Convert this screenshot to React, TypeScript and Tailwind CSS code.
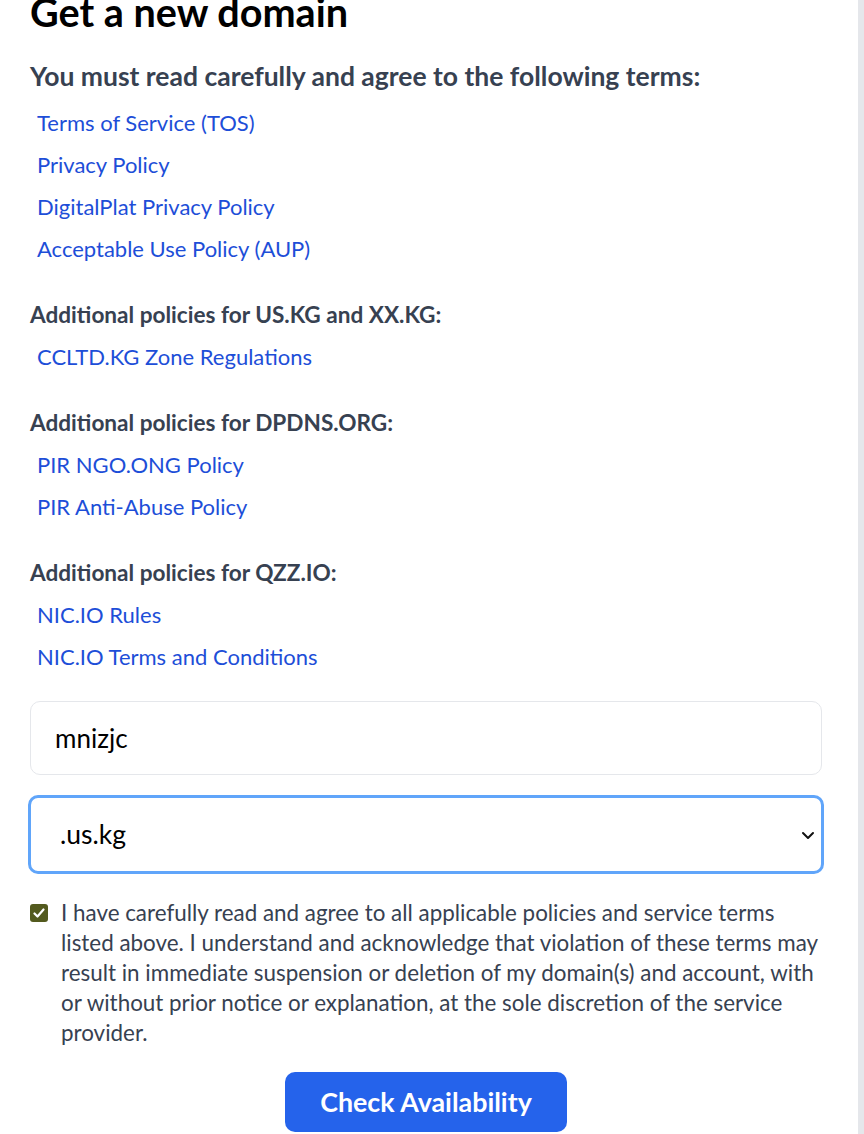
import React from "react";

const links1 = [
  "Terms of Service (TOS)",
  "Privacy Policy",
  "DigitalPlat Privacy Policy",
  "Acceptable Use Policy (AUP)",
];

function LinkList({ items }: { items: string[] }) {
  return (
    <div className="flex flex-col pl-[7px]">
      {items.map((t) => (
        <a key={t} href="#" className="text-[22px] leading-[42px] text-[#1d4ed8]">
          {t}
        </a>
      ))}
    </div>
  );
}

function Section({ title, items }: { title: string; items: string[] }) {
  return (
    <div className="mt-[24px] flex flex-col">
      <div className="text-[22.6px] font-bold leading-[42px] text-[#374151]">{title}</div>
      <LinkList items={items} />
    </div>
  );
}

export default function App() {
  return (
    <div className="min-h-[1134px] w-full bg-[#e5e7eb]" style={{ fontFamily: "Lato, 'Noto Sans', sans-serif" }}>
      <div className="w-[858px] min-h-[1134px] overflow-hidden bg-white pl-[30px] pr-[36px]">
        <h1 className="mt-[-10px] text-[39.6px] font-bold leading-[44px] text-black">Get a new domain</h1>
        <div className="mt-[26px] text-[26.5px] font-bold leading-[32px] text-[#374151]">
          You must read carefully and agree to the following terms:
        </div>
        <div className="mt-[10px]">
          <LinkList items={links1} />
        </div>
        <Section title="Additional policies for US.KG and XX.KG:" items={["CCLTD.KG Zone Regulations"]} />
        <Section title="Additional policies for DPDNS.ORG:" items={["PIR NGO.ONG Policy", "PIR Anti-Abuse Policy"]} />
        <Section title="Additional policies for QZZ.IO:" items={["NIC.IO Rules", "NIC.IO Terms and Conditions"]} />

        <div className="mt-[23px] flex h-[74px] w-[792px] items-center rounded-[10px] border border-[#e5e7eb] pl-[24px] text-[26px] text-black">
          mnizjc
        </div>
        <div className="ml-[-2px] mt-[20px] flex h-[79px] w-[796px] items-center justify-between rounded-[10px] border-[3px] border-[#60a5fa] pl-[29px] pr-[6px] text-[26.5px] text-black">
          <span>.us.kg</span>
          <svg width="14" height="10" viewBox="0 0 14 10" fill="none">
            <path d="M2 3l5 5 5-5" stroke="#111" strokeWidth="2" strokeLinecap="round" strokeLinejoin="round" />
          </svg>
        </div>

        <div className="mt-[24px] flex gap-[13px]">
          <div className="mt-[6px] flex h-[18px] w-[18px] shrink-0 items-center justify-center rounded-[3px] bg-[#535a1e]">
            <svg width="12" height="10" viewBox="0 0 12 10" fill="none">
              <path d="M1.5 5.5l3 3L10.5 1.5" stroke="white" strokeWidth="2.2" strokeLinecap="round" strokeLinejoin="round" />
            </svg>
          </div>
          <p className="mr-[-30px] whitespace-nowrap text-[22.4px] leading-[30px] text-[#374151]">
            I have carefully read and agree to all applicable policies and service terms
            <br />
            listed above. I understand and acknowledge that violation of these terms may
            <br />
            result in immediate suspension or deletion of my domain(s) and account, with
            <br />
            or without prior notice or explanation, at the sole discretion of the service
            <br />
            provider.
          </p>
        </div>

        <div className="mt-[24px] flex justify-center">
          <button className="h-[60px] w-[282px] rounded-[10px] bg-[#2563eb] text-[26.8px] font-bold text-white">
            Check Availability
          </button>
        </div>
      </div>
    </div>
  );
}
